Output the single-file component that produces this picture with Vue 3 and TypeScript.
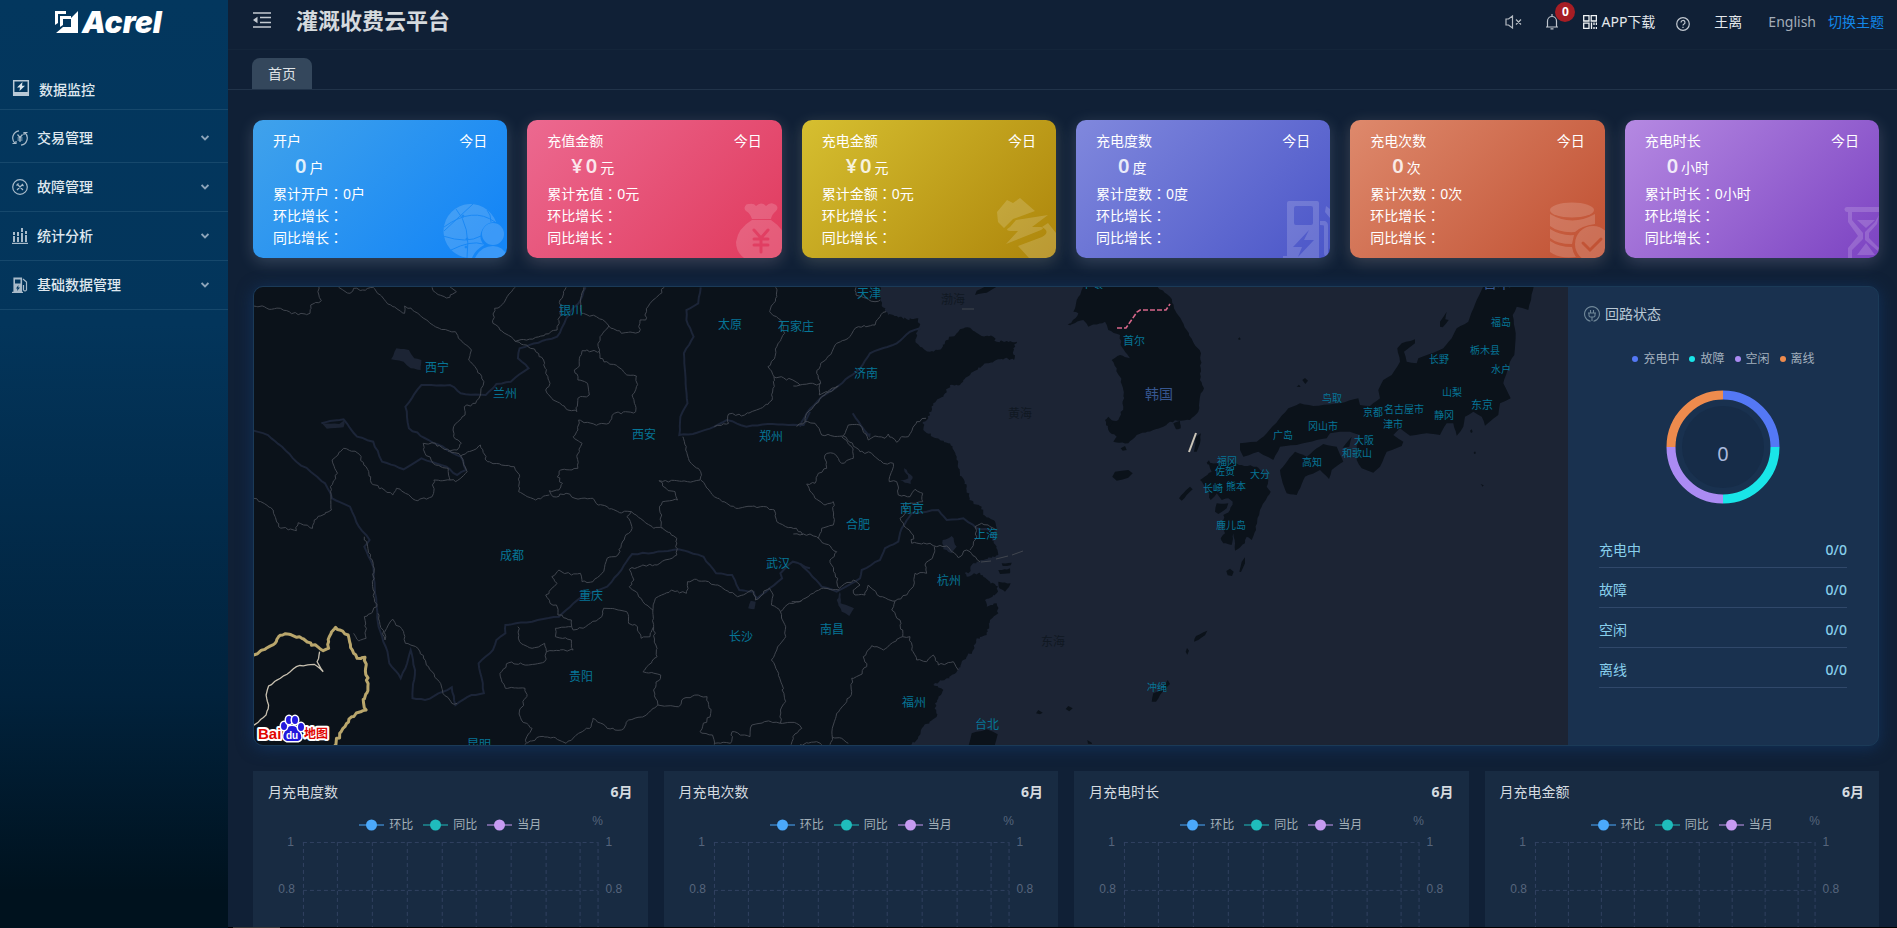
<script setup lang="ts">
type Sheet = { x: number; y: number; sx: number; sy: number }

const menu = [
  { label: '交易管理', icon: 'trade' },
  { label: '故障管理', icon: 'fault' },
  { label: '统计分析', icon: 'stats' },
  { label: '基础数据管理', icon: 'base' },
]

const cards = [
  { title: '开户', prefix: '', unit: '户', total: '累计开户', tone: 'blue' },
  { title: '充值金额', prefix: '¥', unit: '元', total: '累计充值', tone: 'pink' },
  { title: '充电金额', prefix: '¥', unit: '元', total: '累计金额', tone: 'gold' },
  { title: '充电度数', prefix: '', unit: '度', total: '累计度数', tone: 'indigo' },
  { title: '充电次数', prefix: '', unit: '次', total: '累计次数', tone: 'orange' },
  { title: '充电时长', prefix: '', unit: '小时', total: '累计时长', tone: 'purple' },
]

const states = [
  { label: '充电中', color: '#5478f5' },
  { label: '故障', color: '#19e5e8' },
  { label: '空闲', color: '#ab8bf3' },
  { label: '离线', color: '#ee8b4d' },
]

const wideGrid = [50, 84, 119, 154, 189, 223, 258, 293, 327, 345]
const narrowGrid = [50, 83, 116, 149, 182, 214, 247, 280, 313, 330]
const charts = [
  { title: '月充电度数', grid: wideGrid, end: 345 },
  { title: '月充电次数', grid: wideGrid, end: 345 },
  { title: '月充电时长', grid: wideGrid, end: 345 },
  { title: '月充电金额', grid: narrowGrid, end: 330 },
]
const series = [
  { label: '环比', color: '#4ba9fb' },
  { label: '同比', color: '#1fbcbc' },
  { label: '当月', color: '#c79bf2' },
]

// Map sheets: each one has its own origin and units per map pixel.
const west: Sheet = { x: 250, y: 280, sx: 2.8, sy: 3 }
const central: Sheet = { x: 800, y: 280, sx: 3, sy: 3 }
const east: Sheet = { x: 1180, y: 280, sx: 3, sy: 3 }

// Turns a coarse outline into a path with an irregular, coast-like edge.
function trace(sheet: Sheet, text: string, amp = 1, step = 4, closed = false): string {
  const pts = text.split(' ').map((p) => {
    const [a, b] = p.split(',').map(Number)
    return [sheet.x + a / sheet.sx, sheet.y + b / sheet.sy]
  })
  if (closed) pts.push(pts[0])
  let seed = text.length * 7919 + 13
  const rand = () => {
    seed = (seed * 16807) % 2147483647
    return seed / 2147483647 - 0.5
  }
  let d = `M${pts[0][0].toFixed(1)} ${pts[0][1].toFixed(1)}`
  for (let i = 1; i < pts.length; i++) {
    const [x0, y0] = pts[i - 1]
    const [x1, y1] = pts[i]
    const n = Math.max(1, Math.round(Math.hypot(x1 - x0, y1 - y0) / step))
    for (let k = 1; k <= n; k++) {
      const t = k / n
      const j = k === n ? 0 : amp * 2
      d += `L${(x0 + (x1 - x0) * t + rand() * j).toFixed(1)} ${(y0 + (y1 - y0) * t + rand() * j).toFixed(1)}`
    }
  }
  return closed ? d + 'Z' : d
}

const sea = trace(central, '240,18 240,60 265,105 300,110 320,118 355,115 358,140 348,160 350,190 375,210 400,215 425,205 440,180 475,155 480,148 510,143 540,165 580,170 590,185 650,185 640,205 642,240 615,235 560,250 520,275 490,300 480,315 450,315 430,350 400,370 385,415 370,425 370,450 410,475 450,490 470,530 480,580 500,620 508,660 545,680 550,705 580,720 590,750 570,765 590,800 595,825 550,840 520,850 505,880 495,880 500,890 540,878 570,905 595,920 590,940 555,960 560,980 590,970 595,1000 570,1020 560,1065 530,1075 520,1110 490,1140 475,1170 440,1195 400,1215 430,1230 405,1270 410,1310 370,1340 350,1380 325,1400', 1.2, 2) + 'L1580 760L1580 280Z'

const lands = [
  trace(central, '850,15 830,60 820,95 835,100 810,135 850,120 865,140 915,125 925,150 960,165 965,200 990,235 960,225 935,240 960,290 970,330 970,380 955,420 920,425 925,450 950,470 940,485 985,490 1010,465 1060,450 1090,440 1110,425 1170,420 1195,395 1200,350 1212,325 1200,300 1203,220 1160,150 1130,100 1110,50 1065,15', 0.9, 3, true),
  trace(central, '525,45 530,32 565,15 600,15 560,38', 0.5, 4, true),
  trace(central, '505,1400 515,1360 560,1348 593,1363 583,1400', 0.4, 6, true),
  trace(central, '937,590 945,575 985,570 998,580 985,593 950,602', 0.3, 6, true),
  trace(central, '1182,515 1188,470 1203,460 1200,490 1190,515', 0.5, 4, true),
  trace(central, '1137,655 1150,640 1170,620 1178,628 1160,645 1145,662', 0.5, 4, true),
  trace(central, '708,1300 715,1290 728,1298 720,1303', 0.2, 6, true),
  trace(central, '797,1287 805,1278 818,1285 808,1294', 0.2, 6, true),
  trace(central, '1055,1265 1060,1240 1082,1230 1103,1200 1110,1212 1080,1245 1068,1265', 0.4, 4, true),
  trace(central, '862,1380 875,1388 876,1392 864,1391', 0.2, 6, true),
  trace(central, '1182,1085 1188,1068 1222,1052 1215,1066 1195,1080', 0.5, 4, true),
  trace(central, '1157,1115 1161,1104 1167,1112 1162,1124', 0.2, 6, true),
  trace(central, '595,870 630,865 630,880 600,882', 0.8, 3, true),
  trace(central, '595,905 632,910 615,935 598,925', 0.8, 3, true),
  trace(central, '605,850 635,848 632,856 608,858', 0.5, 4, true),
  trace(central, '915,420 925,410 940,425 930,440 918,436', 0.8, 3, true),
  trace(central, '1120,430 1140,422 1142,445 1128,448', 0.6, 3, true),
  trace(central, '962,505 975,498 980,510 968,512', 0.4, 4, true),
  trace(central, '803,134 812,128 812,136', 0, 9, true),
  trace(central, '1220,548 1227,541 1231,550 1224,554', 0, 9, true),
  trace(east, '60,600 95,575 85,548 110,550 150,545 185,555 230,560 250,575 265,600 260,620 272,635 245,680 232,720 228,750 215,780 200,770 195,790 165,812 165,790 160,760 155,795 130,790 122,775 135,760 130,705 150,690 158,665 145,655 125,660 110,640 92,660 80,625', 0.8, 3, true),
  trace(east, '110,670 145,670 140,685 115,702 105,695', 0.5, 4, true),
  trace(east, '180,490 230,485 260,460 325,385 360,370 400,378 480,370 535,355 540,375 570,378 600,355 595,330 610,300 635,285 660,245 652,205 665,190 705,178 705,190 672,215 680,245 710,250 715,235 790,205 815,175 830,145 865,125 890,60 912,15 1062,15 1045,90 1010,80 998,105 1007,160 1003,225 990,245 970,310 992,355 960,370 955,405 915,437 905,410 880,395 855,410 850,440 830,467 820,430 800,430 780,465 740,460 690,467 660,445 640,465 670,485 665,498 620,515 600,560 580,578 545,565 530,540 530,500 540,465 510,455 480,455 450,460 440,475 410,480 350,495 300,500 280,540 235,515 190,530 180,510', 0.4, 5, true),
  trace(east, '300,570 345,515 380,530 410,505 430,492 470,500 490,545 455,570 447,597 420,570 375,590 350,645 320,640 308,610', 0.4, 4, true),
  trace(east, '488,503 515,470 508,500', 0.2, 5, true),
  trace(east, '780,125 800,95 796,118 806,120 788,142 780,140', 0.3, 5, true),
  trace(east, '367,300 375,294 384,302 376,312', 0, 9, true),
  trace(east, '350,320 357,314 362,321', 0, 9, true),
  trace(east, '174,176 179,172 182,178 177,180', 0, 9, true),
  trace(east, '178,875 185,845 195,832 195,850 183,876', 0.2, 6, true),
  trace(east, '139,873 150,866 161,875 156,888 143,886', 0, 9, true),
  trace(east, '870,452 875,448 878,456 873,459', 0, 9, true),
  trace(east, '881,518 885,514 888,520 883,522', 0, 9, true),
  trace(east, '902,612 911,616 908,620', 0, 9, true),
]

const inlandWater = [
  trace(west, '410,205 445,210 460,235 480,240 478,270 450,265 430,245 395,238', 0.5, 4, true),
  trace(west, '200,428 250,432 265,420 262,442 215,446', 0.4, 4, true),
  trace(west, '1395,985 1402,962 1416,965 1412,988', 0.4, 4, true),
  trace(central, '428,780 455,768 470,800 455,820 430,808', 0.8, 3, true),
  trace(central, '300,600 325,595 312,565 338,590 332,612', 0.8, 3, true),
  trace(central, '110,960 120,935 122,970 162,985 148,1008 125,995', 0.8, 3, true),
  trace(central, '195,462 212,460 210,475', 0.5, 3, true),
]

const rivers = [
  trace(west, '10,452 50,465 90,500 130,545 170,575 210,610 230,655 280,680 305,740 335,780 320,800 345,860 350,940 360,1040 380,1100 390,1150 422,1195 440,1150 450,1110 462,1170 455,1255 490,1260 540,1235 565,1222 575,1275 620,1245 655,1240 640,1150 680,1110 690,1080 715,1060 715,1035 790,1025 865,1010 930,950 1000,920 1040,870 1070,822 1130,818 1200,808 1270,830 1305,880 1350,885 1370,930 1410,935 1420,955 1455,925 1490,895 1485,880 1520,845 1568,865', 0.7, 5),
  trace(west, '200,430 262,418 300,470 345,485 370,545 430,568 480,535 550,560 580,585 605,570 590,530 500,480 445,445 435,380 480,315 560,315 590,340 660,345 690,312 730,305 780,265 750,235 755,205 860,170 880,130 900,90 920,70 940,22', 0.7, 5),
  trace(west, '1262,22 1255,70 1222,90 1222,120 1242,170 1215,220 1225,370 1205,410 1202,465 1240,462 1300,440 1335,420 1390,440 1450,432 1550,435 1568,395', 0.5, 5),
  trace(central, '0,440 20,400 65,350 115,318 180,265 210,220 290,190 330,155 360,145', 0.6, 5),
  trace(central, '0,850 30,880 65,920 110,935 180,895 185,870 240,840 255,805 295,785 305,745 335,700 380,695 415,690 440,720 490,715 530,745 570,750', 0.6, 5),
  trace(central, '158,400 185,440 205,465', 0.4, 5),
]

const borders = [
  ...[
    '10,78 40,80 60,88 85,85 110,95 135,104 168,100 170,75 200,62 190,35 192,20',
    '248,22 280,40 290,25 315,30 345,22 365,45 400,80 433,100 433,78 470,100 495,120 530,145 575,155 590,180 620,210 612,240 630,260 655,305 645,345 632,370 600,380 602,405 570,440 570,470 592,490 580,510 555,514',
    '510,22 520,38 550,54 578,35 560,20',
    '742,22 720,50 700,80 685,85 680,130 700,150 742,184 800,172 860,150 868,100 868,60 885,22',
    '935,22 925,60 928,100 970,110 1005,138 980,170 975,200 978,214 930,212 922,258 908,270 918,300 945,310 950,345 918,355 915,395 900,392 880,378 845,355 828,330 840,310 828,280 822,240 800,215 775,195 742,184',
    '1005,138 1040,160 1090,156 1092,120 1108,120 1110,85 1135,55 1160,22',
    '978,214 980,235 1030,260 1055,285 1082,288 1082,320 1070,345 1080,395 1020,400 1005,430 970,436 920,420 918,450 905,470 930,490 915,530 918,565 870,570 860,590 875,610 865,630 838,632 848,650 885,640 910,655 960,655 975,675 1000,680 1035,698 1068,695 1130,745 1155,745',
    '1472,22 1475,50 1455,95 1490,130 1497,160 1475,200 1470,230 1450,260 1467,290 1520,300 1540,315',
    '1467,290 1462,360 1430,385 1385,405 1340,402 1340,430 1300,440',
    '1212,470 1220,510 1240,555 1262,575 1260,600 1225,605 1145,602 1165,625 1190,635 1197,660 1155,665 1147,690 1155,745 1195,775 1195,825 1140,855 1100,855 1062,868 1075,900 1062,920 1085,940 1100,965 1128,990 1130,1040 1140,1130 1100,1175 1150,1185 1130,1230 1142,1275',
    '1262,600 1300,650 1360,685 1430,680 1468,690 1475,725 1500,740 1530,745 1548,765',
    '485,490 510,488 590,528 645,495 665,545 740,560 755,590 752,635 800,660 838,645',
    '485,490 490,520 520,555 555,565 560,600 515,600 510,650 470,662 435,640 410,625 400,645 340,610 325,560 300,518 262,505 230,540 245,580 225,620 228,690 180,720 175,745 135,728 130,752 80,740 65,690 10,655',
    '590,528 608,575 575,605 560,600',
    '1068,695 1055,710 1070,745 1050,770 1030,825 1000,835 985,880 960,905 930,905 925,880 900,885 865,870 845,890 860,910 828,945 840,970 858,975 862,1005 900,1020 905,1050 940,1040 985,1010 990,985 1055,995 1060,1030 1085,1040 1095,1075 1120,1070 1130,1040',
    '900,1040 855,1045 855,1070 900,1080 905,1110 830,1115 825,1090 790,1105 755,1085 750,1040',
    '830,1115 825,1145 780,1155 725,1148 700,1180 715,1225 770,1225 775,1250 755,1290 760,1320 790,1345 775,1370 770,1394',
    '775,1390 810,1370 850,1372 885,1390 920,1360 955,1340 960,1315 1000,1345 1040,1350 1060,1320 1110,1305 1142,1275 1200,1280 1215,1255 1255,1245 1280,1250 1290,1300 1260,1355 1295,1365 1300,1394',
    '1300,1390 1345,1390 1350,1355 1400,1370 1405,1335 1440,1325 1485,1330 1530,1330 1545,1345 1520,1370 1515,1394',
    '1128,990 1135,955 1180,930 1222,940 1225,905 1250,898 1310,915 1365,950 1405,930 1415,960 1455,925 1465,945 1460,975 1485,995 1500,1040 1500,1070 1475,1110 1460,1140 1480,1180 1495,1240 1500,1265 1485,1290 1485,1330',
    '1485,995 1510,970 1545,962',
    '290,1060 305,1083 325,1075 320,1010 340,1000 355,980 345,930 345,850 320,770',
    '358,1000 378,1080 380,1050 400,1018 430,1055 435,1090 470,1105 500,1160 530,1205 540,1240 565,1270 580,1270',
  ].map((t) => trace(west, t, 1.2, 3)),
  ...[
    '-20,318 0,315 30,310 50,315 62,310 50,280 62,250 80,235 110,190 135,180 175,140 225,135 240,110 258,95',
    '168,22 168,45 200,55 225,65 240,60',
    '60,310 58,345 115,318',
    '-10,440 15,425 20,400 65,350 115,318',
    '15,425 45,430 65,465 130,468 180,515 215,520 250,550 280,550 268,605 290,605 295,645 330,650 345,628 368,640 368,665 340,670 315,670',
    '130,468 145,435 180,435 205,480 225,468 255,475 265,462 290,487 305,470 325,470 350,425 378,415',
    '125,470 155,500 160,535 125,550 100,520 75,525 80,565 55,580 45,610 20,612 45,655 75,675 100,665 100,735 65,745 55,775 110,815 90,840 105,880 118,925',
    '-20,762 0,765 30,762 55,775',
    '310,670 315,700 300,715 320,745 340,765 335,790 390,790 410,800 440,798 475,833 500,810 510,815 540,845',
    '510,810 530,770 525,740 545,730 590,750',
    '403,800 400,825 375,855 380,880 345,880 340,920 320,945 285,963 240,950 205,915 195,945 165,945 160,930 180,915 160,900 118,925',
    '118,930 65,925 40,940 0,965 -25,965',
    '285,963 275,990 300,1020 308,1070 330,1070 335,1110 350,1140 380,1145 400,1125 415,1155 460,1145 475,1170',
    '308,1070 250,1110 215,1097 190,1130 200,1160 180,1185 155,1195 155,1235 140,1265 110,1300 100,1335 97,1372 125,1375 145,1390',
    '0,1394 50,1385 65,1394',
    '97,1372 90,1394',
  ].map((t) => trace(central, t, 1.1, 3)),
]

const thickBorder = trace(west, '4,1132 70,1090 80,1070 110,1063 145,1075 205,1112 220,1105 222,1070 240,1042 275,1065 290,1120 300,1135 322,1132 330,1220 318,1270 325,1290 285,1310 255,1355 235,1400', 1.3, 3)
const thinBorder = trace(west, '195,1115 188,1145 205,1175 180,1153 130,1160 85,1195 52,1218 45,1245 52,1275 45,1305 4,1340', 0.7, 4)

type Place = [string, number, number, number?, string?]
const places: Place[] = [
  ['银川', 571, 311], ['西宁', 437, 368], ['兰州', 505, 394], ['太原', 730, 325], ['石家庄', 796, 327],
  ['西安', 644, 435], ['郑州', 771, 437], ['成都', 512, 556], ['武汉', 778, 564], ['重庆', 591, 596],
  ['长沙', 741, 637], ['贵阳', 581, 677], ['昆明', 479, 745], ['天津', 869, 294], ['济南', 866, 374],
  ['首尔', 1134, 341, 11], ['南京', 912, 509], ['合肥', 858, 525], ['上海', 986, 535], ['杭州', 949, 581],
  ['南昌', 832, 630], ['福州', 914, 703], ['台北', 987, 725], ['冲绳', 1157, 687, 10], ['平壤', 1092, 284, 11],
  ['渤海', 953, 300, 12, 'water'], ['黄海', 1020, 414, 12, 'water'], ['东海', 1053, 642, 12, 'water'],
  ['韩国', 1159, 395, 14, 'country'], ['日本', 1497, 284, 14, 'country'],
  ['福岛', 1501, 322, 10], ['栃木县', 1485, 350, 10], ['长野', 1439, 359, 10], ['水户', 1501, 369, 10],
  ['山梨', 1452, 392, 10], ['东京', 1482, 405, 11], ['静冈', 1444, 415, 10], ['名古屋市', 1404, 409, 10],
  ['京都', 1373, 412, 10], ['津市', 1393, 424, 10], ['鸟取', 1332, 398, 10], ['冈山市', 1323, 426, 10],
  ['广岛', 1283, 435, 10], ['大阪', 1364, 440, 10], ['和歌山', 1357, 453, 10], ['高知', 1312, 462, 10],
  ['福冈', 1227, 461, 10], ['佐贺', 1225, 471, 10], ['大分', 1260, 474, 10], ['长崎', 1213, 488, 10],
  ['熊本', 1236, 486, 10], ['鹿儿岛', 1231, 525, 10],
]
</script>

<template>
  <div class="app">
    <aside class="sidebar">
      <div class="logo">
        <svg width="24" height="22" viewBox="0 0 24 22" fill="#fff">
          <path d="M0 0H11V3H3V12L0 14Z" />
          <path d="M5 5H16V8H8V14L5 16Z" />
          <path d="M23 0V22H1L8 16H16V7Z" />
        </svg>
        <span>Acrel</span>
      </div>
      <nav>
        <a href="#" class="item first">
          <svg width="18" height="18" viewBox="0 0 18 18">
            <path d="M1.700 1.700H16.300V16H1.700Z" fill="none" stroke="#b9c9d6" stroke-width="1.500" />
            <path d="M1 13H17V17H1Z" fill="#b9c9d6" />
            <path d="M10.500 3L5 8.500H8L7.500 12L13 6.800H10Z" fill="#dbe5ec" />
          </svg>
          <span>数据监控</span>
        </a>
        <a v-for="m in menu" :key="m.label" href="#" class="item">
          <svg width="16" height="16" viewBox="0 0 16 16" fill="none" stroke="#a9bbca" stroke-width="1.200">
            <template v-if="m.icon === 'trade'">
              <path d="M7 .8A7.300 7.300 0 0 0 3 13.300M.5 13.500H4V11M9 15.200A7.300 7.300 0 0 0 13 2.700M15.500 2.500H12V5" />
              <path d="M5.500 4.500L8 7.500L10.500 4.500M8 7.500V12M5.500 8H10.500M5.500 10H10.500" />
            </template>
            <template v-else-if="m.icon === 'fault'">
              <circle cx="8" cy="8" r="7.300" />
              <path d="M5.500 5.500L11 11M11 5L5 11M4.500 6.500L6.500 4.500M10 5.500L11.500 7" />
            </template>
            <template v-else-if="m.icon === 'stats'">
              <path d="M0 15.400H16" />
              <path d="M2 14V8M6 14V9M10 14V5M14 14V7M2 7V4M6 8V4M10 4V0M14 6V3" stroke-width="2" />
            </template>
            <template v-else>
              <path d="M0 15.400H11" />
              <path d="M2 15V1H9.500V15Z" fill="#a9bbca" stroke="#a9bbca" />
              <path d="M3 2.500H8.500V6.500H3Z" fill="#03375e" stroke="none" />
              <path d="M6.500 8L4 11.500H5.500L5 14L8 10.500H6.200Z" fill="#03375e" stroke="none" />
              <path d="M11 2L14.500 5V13Q13 15 11.500 13V8" />
            </template>
          </svg>
          <span>{{ m.label }}</span>
          <svg class="chev" width="8" height="6" viewBox="0 0 8 6" fill="none" stroke="#8da5ba" stroke-width="1.800">
            <path d="M.6 1L4 4.400L7.400 1" />
          </svg>
        </a>
      </nav>
    </aside>

    <div class="main">
      <header class="topbar">
        <button class="plain" aria-label="收起菜单">
          <svg width="18" height="16" viewBox="0 0 18 16" fill="none" stroke="#c3c9d1" stroke-width="1.500">
            <path d="M0 1H18M7 5.600H18M7 10.400H18M0 15H18" />
            <path d="M4.500 4.800V11.200L0 8Z" fill="#c3c9d1" stroke="none" />
          </svg>
        </button>
        <h1>灌溉收费云平台</h1>
        <div class="tools">
          <button class="plain mute" aria-label="静音">
            <svg width="18" height="14" viewBox="0 0 18 14" fill="none" stroke="#b4bac2" stroke-width="1.200">
              <path d="M1 4V10H3.500L7.500 13V1L3.500 4ZM11 4.500L16 9.500M16 4.500L11 9.500" />
            </svg>
          </button>
          <button class="plain bell" aria-label="通知">
            <svg width="14" height="16" viewBox="0 0 14 16" fill="none" stroke="#c0c6ce" stroke-width="1.200">
              <path d="M1 13H13M2.500 13V7A4.500 4.500 0 0 1 11.500 7V13M7 0V2.500M5.500 14.800H8.500" />
            </svg>
            <span class="badge">0</span>
          </button>
          <a href="#" class="download">
            <svg width="14" height="14" viewBox="0 0 14 14" fill="none" stroke="#f0f3f5" stroke-width="1.300">
              <path d="M.7.700H6V6H.7ZM8.200.700H13.400V6H8.200ZM.7 8.200H6V13.400H.7ZM8.500 7.500V14M11 7.500V10M13.400 7.500V10M11 12V14M13.400 12V14" />
            </svg>
            <span>APP下载</span>
          </a>
          <button class="plain help" aria-label="帮助">
            <svg width="14" height="14" viewBox="0 0 14 14" fill="none" stroke="#c3c9d1" stroke-width="1.200">
              <circle cx="7" cy="7" r="6.300" />
              <path d="M5 5.500A2 2 0 1 1 7.800 7.300Q7 7.700 7 8.600M7 9.700V11" />
            </svg>
          </button>
          <a href="#" class="user">王离</a>
          <a href="#" class="lang">English</a>
          <a href="#" class="theme">切换主题</a>
        </div>
      </header>

      <div class="tabs"><button class="tab">首页</button></div>

      <main class="content">
        <section class="cards">
          <article v-for="c in cards" :key="c.title" class="card" :class="c.tone">
            <div class="head"><span>{{ c.title }}</span><span>今日</span></div>
            <div class="value" :class="{ money: c.prefix }">
              <b v-if="c.prefix">{{ c.prefix }}</b><b>0</b><span>{{ c.unit }}</span>
            </div>
            <p>{{ c.total }}<i>：</i>0{{ c.unit }}</p>
            <p>环比增长<i>：</i></p>
            <p>同比增长<i>：</i></p>
            <svg class="mark" width="64" height="60" viewBox="0 0 64 60" fill="#fff" aria-hidden="true">
              <template v-if="c.tone === 'blue'">
                <path d="M53 24A27 27 0 1 0 29 60Q32 52 41 47A14 14 0 0 1 53 24Z" />
                <circle cx="50" cy="36" r="11" />
                <path d="M32 60Q38 48 50 48Q60 48 64 58V60Z" />
                <g class="cut-line">
                  <path d="M13 11Q28 28 24 60M1 29Q30 8 52 24M0 38Q24 46 38 38M8 52Q28 42 40 46M30 6Q17 18 1 33M44 12Q48 16 48 24" />
                  <circle cx="20" cy="18" r="1" /><circle cx="24" cy="41" r="1" /><circle cx="23" cy="49" r="1" />
                </g>
              </template>
              <template v-else-if="c.tone === 'pink'">
                <path d="M34 21Q32 15 28 13A4 4 0 0 1 31 6Q36 5 38 8Q43 3 48 8Q52 4 56 6A4 4 0 0 1 58 13Q54 16 53 21Z" />
                <path d="M34 22H53Q68 32 69 46Q67 57 60 60H26Q18 54 18 44Q20 30 34 22Z" />
                <path class="cut-line thick" d="M36 32L43 40L50 32M43 40V54M36 41H50M36 47H50" />
              </template>
              <template v-else-if="c.tone === 'gold'">
                <path d="M5 14L15 2L21 5L28 0L43 13L21 21L12 30L6 24Z" />
                <path d="M18 29L24 22L56 17L40 29H49Q53 30 49 32L14 46L26 33H18Q12 32 18 29Z" />
                <path d="M26 48L50 39Q59 34 50 29L56 25L64 35V60H37Z" />
              </template>
              <template v-else-if="c.tone === 'indigo'">
                <path fill-rule="evenodd" d="M21 60V5Q21 3 23 3H51Q53 3 53 5V60ZM30 8Q28 8 28 10V25Q28 27 30 27H45Q47 27 47 25V10Q47 8 45 8ZM43 32L27 49H36L32 59L48 42H38Z" />
                <path d="M54 23H59Q62 24 62 28V54Q62 56 64 56V59Q58 60 58 55V28Q58 27 54 27ZM60 8L64 11V20L59 14Z" />
                <path d="M17 58H21V60H17Z" />
              </template>
              <template v-else-if="c.tone === 'orange'">
                <ellipse cx="31" cy="12" rx="22" ry="7.500" />
                <path d="M9 16Q31 29 54 16V26Q40 28 34 34Q18 35 9 28ZM9 31Q20 38 33 37L31 46Q16 46 9 40ZM9 43Q18 49 31 49Q32 55 35 59Q18 61 9 54Z" />
                <circle cx="52" cy="46" r="18" />
                <path class="cut-line thick" d="M42 45L49 52L60 41" />
              </template>
              <template v-else>
                <path d="M32 9H64V14H32A2 2 0 0 1 32 9Z" />
                <path d="M33 14H37V22L48 35V41L37 52V60H33V50L43 38L33 24Z" />
                <path d="M64 17L62 26L54 35V40L64 50V54L50 42V34L60 24Z" />
                <path d="M42 22H60L51 30ZM42 57L51 45L60 57Z" />
              </template>
            </svg>
          </article>
        </section>

        <section class="overview">
          <svg class="map" viewBox="254 287 1314 458" preserveAspectRatio="xMidYMid slice" role="img" aria-label="地图">
            <rect x="0" y="0" width="2400" height="1400" fill="#0b121a" />
            <path :d="sea" fill="#1c2434" />
            <path v-for="(d, i) in lands" :key="'l' + i" :d="d" fill="#0b121a" />
            <path v-for="(d, i) in inlandWater" :key="'w' + i" :d="d" fill="#1c2434" />
            <path v-for="(d, i) in rivers" :key="'r' + i" :d="d" class="river" />
            <path v-for="(d, i) in borders" :key="'b' + i" :d="d" class="border" />
            <path d="M981 562L991 561M996 559L1008 556M1012 555L1023 551M962 309H974" class="border" />
            <path :d="thinBorder" fill="none" stroke="#c8c0b0" stroke-width="1.300" />
            <path :d="thickBorder" fill="none" stroke="#b9a66c" stroke-width="3" stroke-linejoin="round" />
            <path d="M1117 328H1126L1137 312L1140 310H1166L1170 304" fill="none" stroke="#d8678a" stroke-width="1.600" stroke-dasharray="5 2" />
            <path d="M1189 452L1196 433" stroke="#ccc6b8" stroke-width="2" />
            <text
              v-for="p in places"
              :key="p[0]"
              :x="p[1]"
              :y="p[2] + 4"
              :font-size="p[3] ?? 12"
              :class="['place', p[4]]"
            >{{ p[0] }}</text>
            <g class="maplogo">
              <text x="258" y="739" font-size="15">Bai</text>
              <text x="304" y="738" font-size="12" class="cn">地图</text>
              <g fill="#2319dc" stroke="#fff" stroke-width="3" paint-order="stroke">
                <path d="M292 726Q297 726 299 731Q304 739 298 741H287Q281 739 285 731Q287 726 292 726Z" />
                <ellipse cx="284" cy="726" rx="3" ry="4" /><ellipse cx="289" cy="720" rx="3" ry="4" />
                <ellipse cx="295" cy="720" rx="3" ry="4" /><ellipse cx="301" cy="727" rx="3" ry="4" />
              </g>
              <text x="286" y="739" font-size="10" class="du">du</text>
            </g>
          </svg>

          <div class="status">
            <h2>
              <svg width="16" height="16" viewBox="0 0 16 16" fill="none" stroke="#6f8798" stroke-width="1.100">
                <path d="M6.500 15.300A7.400 7.400 0 1 1 9.500 15.300M4 7H12M5 7V9.500Q5 11 6.500 11H9.500Q11 11 11 9.500V7M6.500 4V7M9.500 4V7M8 11V15" />
              </svg>
              <span>回路状态</span>
            </h2>
            <ul class="legend">
              <li v-for="s in states" :key="s.label"><svg width="6" height="6"><circle cx="3" cy="3" r="3" :fill="s.color" /></svg>{{ s.label }}</li>
            </ul>
            <svg class="donut" width="114" height="114" viewBox="0 0 114 114">
              <circle cx="57" cy="57" r="41" fill="#162c48" />
              <g fill="none" stroke-width="9">
                <path d="M57 5A52 52 0 0 1 109 57" stroke="#5478f5" />
                <path d="M109 57A52 52 0 0 1 57 109" stroke="#19e5e8" />
                <path d="M57 109A52 52 0 0 1 5 57" stroke="#ab8bf3" />
                <path d="M5 57A52 52 0 0 1 57 5" stroke="#ee8b4d" />
              </g>
              <text x="57" y="71" text-anchor="middle">0</text>
            </svg>
            <dl>
              <div v-for="s in states" :key="s.label"><dt>{{ s.label }}</dt><dd>0/0</dd></div>
            </dl>
          </div>
        </section>

        <section class="charts">
          <article v-for="c in charts" :key="c.title" class="chart">
            <div class="chart-head"><span>{{ c.title }}</span><b>6月</b></div>
            <ul class="series">
              <li v-for="s in series" :key="s.label">
                <svg width="25" height="12"><path d="M0 6H25" :stroke="s.color" /><circle cx="12.500" cy="6" r="5.500" :fill="s.color" /></svg>{{ s.label }}
              </li>
            </ul>
            <svg class="plot" viewBox="0 0 395 120" aria-hidden="true">
              <path v-for="x in c.grid" :key="x" :d="`M${x}.5 20V120`" class="grid" />
              <path :d="`M50 20.5H${c.end}M50 68.5H${c.end}`" class="grid" />
              <text x="41" y="24" text-anchor="end">1</text>
              <text x="42" y="71" text-anchor="end">0.8</text>
              <text :x="c.end + 8" y="24">1</text>
              <text :x="c.end + 8" y="71">0.8</text>
              <text :x="c.end" y="3" text-anchor="middle">%</text>
            </svg>
          </article>
        </section>
      </main>
    </div>
    <div class="scrollbar"></div>
  </div>
</template>

<style>
html,
body {
  margin: 0;
  overflow: hidden;
  background: #102036;
}
</style>

<style scoped>
* {
  box-sizing: border-box;
}
.app {
  position: relative;
  display: flex;
  height: 100vh;
  overflow: hidden;
  background: #102036;
  color: #e4e8ec;
  font: 14px/20px 'Noto Sans', 'Noto Sans CJK SC', sans-serif;
}
a {
  color: inherit;
  text-decoration: none;
}
ul,
dl,
dd,
p,
h1,
h2 {
  margin: 0;
  padding: 0;
  list-style: none;
}
.plain {
  display: flex;
  align-items: center;
  border: 0;
  padding: 0;
  background: none;
}
.sidebar {
  flex: 0 0 228px;
  background: linear-gradient(#03375e, #03355b 35%, #01223c 75%, #00121e 96%);
}
.logo {
  display: flex;
  align-items: center;
  gap: 3px;
  height: 44px;
  padding-left: 55px;
  color: #fff;
  font: italic 900 30px/44px Inter, sans-serif;
}
.item {
  display: flex;
  align-items: center;
  gap: 9px;
  height: 49px;
  padding: 0 19px 0 12px;
  border-bottom: 1px solid #16486c;
  font-weight: 500;
  color: #dfe7ee;
}
.item.first {
  height: 66px;
  padding-top: 26px;
}
.item.first svg {
  margin-bottom: 4px;
}
.item.first + .item {
  height: 53px;
  padding-top: 4px;
}
.chev {
  margin-left: auto;
}
.main {
  flex: 1;
  min-width: 0;
}
.topbar {
  display: flex;
  align-items: center;
  height: 50px;
  padding: 0 13px 10px 25px;
  border-bottom: 1px solid #14253a;
}
h1 {
  margin-left: 25px;
  color: #d5dade;
  font-size: 22px;
  line-height: 30px;
  font-weight: 700;
}
.tools {
  display: flex;
  align-items: center;
  margin-left: auto;
  padding-top: 4px;
}
.bell {
  position: relative;
  margin-left: 22px;
}
.badge {
  position: absolute;
  left: 10px;
  top: -12px;
  width: 20px;
  height: 20px;
  border-radius: 10px;
  background: #a61d24;
  color: #fff;
  font: 700 12px/20px 'Noto Sans', sans-serif;
  text-align: center;
}
.download {
  display: flex;
  align-items: center;
  gap: 4px;
  margin-left: 24px;
}
.help {
  margin-left: 21px;
  padding-top: 4px;
}
.user {
  margin-left: 24px;
}
.lang {
  margin-left: 26px;
  color: #a3adb9;
}
.theme {
  margin-left: 12px;
  color: #1287e8;
}
.tabs {
  display: flex;
  align-items: flex-end;
  height: 40px;
  padding-left: 24px;
  border-bottom: 1px solid #213349;
}
.tab {
  height: 31px;
  padding: 0 16px;
  border: 0;
  border-radius: 8px 8px 0 0;
  background: #34475c;
  color: #dfe3e6;
  font: inherit;
}
.content {
  padding: 30px 18px 0 25px;
}
.cards {
  display: grid;
  grid-template-columns: repeat(6, 1fr);
  gap: 20px;
}
.card {
  position: relative;
  height: 138px;
  padding: 10px 20px 0;
  border-radius: 10px;
  color: #fff;
}
.blue {
  --tone: #1d87f2;
  background: linear-gradient(135deg, #40a2eb, #1586f6 90%);
  box-shadow: 0 4px 16px #dcebff30;
}
.pink {
  --tone: #e24168;
  background: linear-gradient(135deg, #ec6990, #e03a5d);
  box-shadow: 0 4px 16px #ffdce430;
}
.gold {
  --tone: #b08c10;
  background: linear-gradient(135deg, #d6bf30, #ad850b);
  box-shadow: 0 4px 16px #f0e8c430;
}
.indigo {
  --tone: #505ac9;
  background: linear-gradient(135deg, #8088dd, #4b56c8);
  box-shadow: 0 4px 16px #dcdfff30;
}
.orange {
  --tone: #c25133;
  background: linear-gradient(135deg, #de896c, #c05032);
  box-shadow: 0 4px 16px #ffe0d430;
}
.purple {
  --tone: #8248c4;
  background: linear-gradient(135deg, #b589e2, #7c43c2);
  box-shadow: 0 4px 16px #ecdcff30;
}
.head {
  display: flex;
  justify-content: space-between;
  line-height: 22px;
}
.value {
  display: flex;
  align-items: baseline;
  gap: 3px;
  height: 31px;
  padding-left: 22px;
  line-height: 28px;
}
.value.money {
  padding-left: 24px;
}
.value b {
  font-size: 20px;
  font-weight: 600;
  opacity: 0.85;
}
.card p {
  height: 22px;
  line-height: 22px;
}
.card i {
  font-family: 'Noto Sans CJK TC', sans-serif;
  font-style: normal;
  line-height: 1;
}
.mark {
  position: absolute;
  right: 0;
  bottom: 0;
  border-bottom-right-radius: 10px;
  opacity: 0.16;
}
.cut-line {
  fill: var(--tone);
  stroke: var(--tone);
  stroke-width: 1;
}
path.cut-line,
.cut-line path {
  fill: none;
}
.thick {
  stroke-width: 3;
  stroke-linecap: round;
}
.overview {
  display: flex;
  height: 460px;
  margin-top: 28px;
  overflow: hidden;
  border: 1px solid #1b3a57;
  border-radius: 10px;
  background: #19314f;
  box-shadow: 0 2px 16px #12315a;
}
.map {
  flex: 1;
  min-width: 0;
  height: 100%;
}
.river {
  fill: none;
  stroke: #1c2538;
  stroke-width: 2;
}
.border {
  fill: none;
  stroke: #41464f;
  stroke-width: 1;
}
.place {
  fill: #067596;
  text-anchor: middle;
}
.place.water {
  fill: #101822;
}
.place.country {
  fill: #36568f;
}
.maplogo text {
  fill: #e10601;
  stroke: #fff;
  stroke-width: 4px;
  stroke-linejoin: round;
  paint-order: stroke;
  font-family: 'Liberation Sans', sans-serif;
  font-weight: 700;
}
.maplogo .cn {
  font-family: 'Noto Sans CJK SC', sans-serif;
}
.maplogo .du {
  fill: #fff;
  stroke: none;
}
.status {
  flex: 0 0 310px;
  padding: 17px 31px 0 16px;
}
h2 {
  display: flex;
  align-items: center;
  gap: 5px;
  color: #b9c8d4;
  font-size: 14px;
  line-height: 20px;
  font-weight: 400;
}
.legend {
  display: flex;
  justify-content: center;
  gap: 10px;
  margin: 25px 0 0 16px;
  color: #a3b0be;
  font-size: 12px;
}
.legend li {
  display: flex;
  align-items: center;
  gap: 5px;
}
.donut {
  display: block;
  margin: 21px auto 0 82px;
}
.donut text {
  fill: #aab9dc;
  font-size: 20px;
}
dl {
  margin: 24px 0 0 15px;
}
dl div {
  display: flex;
  justify-content: space-between;
  height: 40px;
  padding-top: 12px;
  border-bottom: 1px solid #30486a;
  color: #87ceeb;
}
dl dd {
  font-weight: 500;
}
.charts {
  display: grid;
  grid-template-columns: repeat(4, 1fr);
  gap: 16px;
  margin-top: 25px;
}
.chart {
  height: 320px;
  background: #182b42;
}
.chart-head {
  display: flex;
  justify-content: space-between;
  padding: 11px 15px 0 15px;
  color: #d5dbe0;
}
.series {
  display: flex;
  justify-content: center;
  gap: 10px;
  margin-top: 14px;
  color: #a3b0b9;
  font-size: 12px;
  line-height: 18px;
}
.series li {
  display: flex;
  align-items: center;
  gap: 5px;
}
.plot {
  display: block;
  width: 100%;
  margin-top: -12px;
  overflow: visible;
}
.plot text {
  fill: #56657c;
  font: 12px 'Liberation Sans', sans-serif;
}
.grid {
  fill: none;
  stroke: #314160;
  stroke-dasharray: 4 3;
}
.scrollbar {
  position: absolute;
  left: 228px;
  right: 0;
  bottom: 0;
  height: 1px;
  background: linear-gradient(90deg, #000 5px, #3a3a3a 5px, #3a3a3a 52px, #000 52px);
}
</style>
